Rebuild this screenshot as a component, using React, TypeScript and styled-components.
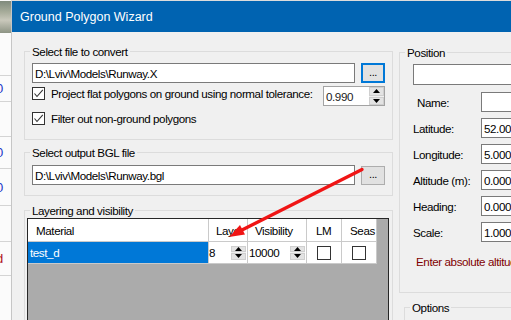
import React from "react";
import styled, { createGlobalStyle } from "styled-components";

const UI = "'Liberation Sans', Arial, sans-serif";

const GlobalStyle = createGlobalStyle`
  html, body { margin: 0; padding: 0; width: 511px; height: 320px; overflow: hidden; background: #dedede; }
  body { font-family: ${UI}; font-size: 11.6px; letter-spacing: -0.4px; color: #000; }
  * { box-sizing: border-box; }
`;

const Screen = styled.div`
  position: relative;
  width: 511px;
  height: 320px;
  display: flex;
  overflow: hidden;
  background: #dcdcdc;
`;

/* ---------- application behind the dialog ---------- */
const Backdrop = styled.div`
  width: 11px;
  flex: none;
  display: flex;
  flex-direction: column;
  background: #fbfbfb;
  overflow: hidden;
  padding-top: 1px;
`;
const BackdropPicture = styled.div`
  height: 32px;
  flex: none;
  background: linear-gradient(180deg, #7f8a7c 0%, #a8ad9b 35%, #c9c8bb 60%, #8d9484 100%);
`;
const BackdropRow = styled.div<{ $h: number }>`
  height: ${(p) => p.$h}px;
  flex: none;
  border-bottom: 1px solid #d4d4d4;
  display: flex;
  align-items: center;
  overflow: hidden;
`;
const BackdropGlyph = styled.span<{ $color: string }>`
  margin-left: -4px;
  font-size: 13px;
  color: ${(p) => p.$color};
`;

/* ---------- dialog window ---------- */
const Window = styled.div`
  flex: 1;
  min-width: 0;
  display: flex;
  flex-direction: column;
  margin-top: 1px;
  background: #f0f0f0;
  border-left: 1px solid #c6c6c6;
  overflow: hidden;
`;
const TitleBar = styled.div`
  height: 31px;
  flex: none;
  background: #0063b1;
  color: #fff;
  font-size: 12.5px;
  letter-spacing: 0;
  display: flex;
  align-items: center;
  padding-left: 8px;
`;
const Body = styled.div`
  flex: 1;
  display: flex;
  gap: 6px;
  padding-left: 12px;
  min-height: 0;
  overflow: hidden;
`;
const Column = styled.div<{ $w: number; $pt: number }>`
  width: ${(p) => p.$w}px;
  flex: none;
  padding-top: ${(p) => p.$pt}px;
  display: flex;
  flex-direction: column;
`;

const Group = styled.fieldset<{ $mt?: number; $ml?: number }>`
  margin: ${(p) => p.$mt ?? 0}px 0 0 ${(p) => p.$ml ?? 0}px;
  padding: 0;
  min-width: 0;
  border: 1px solid #dcdcdc;
`;
const Legend = styled.legend`
  padding: 0 2px;
  margin-left: 5px;
  line-height: 15px;
  font-size: 11.6px;
`;
const GroupContent = styled.div<{ $pad: string }>`
  padding: ${(p) => p.$pad};
  display: flex;
  flex-direction: column;
`;

const FileRow = styled.div`
  display: flex;
  align-items: center;
  gap: 6px;
  height: 20px;
`;
const TextBox = styled.div<{ $w?: number; $h?: number }>`
  ${(p) => (p.$w ? `width: ${p.$w}px; flex: none;` : "flex: 1;")}
  height: ${(p) => p.$h ?? 20}px;
  border: 1px solid #7a7a7a;
  background: #fff;
  padding-left: 2px;
  display: flex;
  align-items: center;
  white-space: nowrap;
  overflow: hidden;
`;
const BrowseButton = styled.div<{ $focused?: boolean }>`
  width: 24px;
  height: ${(p) => (p.$focused ? 20 : 19)}px;
  flex: none;
  background: #e1e1e1;
  border: ${(p) => (p.$focused ? "2px solid #0078d7" : "1px solid #adadad")};
  display: flex;
  align-items: center;
  justify-content: center;
  padding-bottom: 2px;
  font-size: 11px;
`;

const OptionRow = styled.div<{ $mt: number; $h: number }>`
  display: flex;
  align-items: flex-start;
  margin-top: ${(p) => p.$mt}px;
  height: ${(p) => p.$h}px;
`;
const CheckLabel = styled.span`
  margin-left: 6px;
  line-height: 15px;
  white-space: nowrap;
`;
const CheckBoxBox = styled.span<{ $size?: number; $mt?: number }>`
  width: ${(p) => p.$size ?? 13}px;
  height: ${(p) => p.$size ?? 13}px;
  margin-top: ${(p) => p.$mt ?? 0}px;
  flex: none;
  border: 1px solid #333;
  background: #fff;
  display: flex;
  align-items: center;
  justify-content: center;
`;

const Numeric = styled.div`
  margin-left: auto;
  width: 62px;
  height: 20px;
  border: 1px solid #a3a3a3;
  background: #fff;
  display: flex;
  align-items: stretch;
`;
const NumericText = styled.span`
  flex: 1;
  padding-left: 2px;
  display: flex;
  align-items: center;
  color: #1b1b1b;
`;
const SpinStack = styled.div<{ $w: number; $h?: number; $mr?: number }>`
  width: ${(p) => p.$w}px;
  ${(p) => (p.$h ? `height: ${p.$h}px; margin-left: auto; margin-right: ${p.$mr ?? 0}px;` : "")}
  flex: none;
  display: flex;
  flex-direction: column;
  gap: 1px;
  background: #f0f0f0;
`;
const SpinHalf = styled.div`
  flex: 1;
  background: #e3e3e3;
  border: 1px solid #cfcfcf;
  display: flex;
  align-items: center;
  justify-content: center;
`;

/* ---------- grid ---------- */
const Grid = styled.div`
  border: 1px solid #262626;
  background: #ababab;
  height: 112px;
  display: flex;
  flex-direction: column;
`;
const GridRow = styled.div<{ $h: number }>`
  display: flex;
  height: ${(p) => p.$h}px;
  flex: none;
`;
const Cell = styled.div<{ $w: number; $pad: number; $selected?: boolean; $center?: boolean }>`
  width: ${(p) => p.$w}px;
  flex: none;
  background: ${(p) => (p.$selected ? "#0078d7" : "#fff")};
  color: ${(p) => (p.$selected ? "#fff" : "#000")};
  border-right: 1px solid #cacaca;
  border-bottom: 1px solid #cacaca;
  padding-left: ${(p) => p.$pad}px;
  display: flex;
  align-items: center;
  justify-content: ${(p) => (p.$center ? "center" : "flex-start")};
  white-space: nowrap;
  overflow: hidden;
`;

/* ---------- right side ---------- */
const FieldRow = styled.div<{ $mt: number }>`
  display: flex;
  align-items: center;
  height: 20px;
  margin-top: ${(p) => p.$mt}px;
`;
const FieldLabel = styled.span<{ $indent?: number }>`
  width: 68px;
  flex: none;
  padding-left: ${(p) => p.$indent ?? 0}px;
  white-space: nowrap;
`;
const Hint = styled.div`
  margin-top: 12px;
  line-height: 15px;
  padding-left: 3px;
  color: #800000;
  white-space: nowrap;
`;

const Overlay = styled.svg`
  position: absolute;
  left: 0;
  top: 0;
  pointer-events: none;
`;

const Check = () => (
  <svg width="11" height="11" viewBox="0 0 11 11">
    <polyline points="1.5,5.5 4,8.5 9.8,1.8" fill="none" stroke="#333" strokeWidth="1.1" />
  </svg>
);

const Arrow = ({ up }: { up: boolean }) => (
  <svg width="7" height="4" viewBox="0 0 7 4">
    {up ? <polygon points="0,4 7,4 3.5,0" fill="#000" /> : <polygon points="0,0 7,0 3.5,4" fill="#000" />}
  </svg>
);

const Spin = ({ w, h, mr }: { w: number; h?: number; mr?: number }) => (
  <SpinStack $w={w} $h={h} $mr={mr}>
    <SpinHalf>
      <Arrow up />
    </SpinHalf>
    <SpinHalf>
      <Arrow up={false} />
    </SpinHalf>
  </SpinStack>
);

const columns = [
  { label: "Material", w: 181, pad: 8 },
  { label: "Layer", w: 39, pad: 7 },
  { label: "Visibility", w: 59, pad: 7 },
  { label: "LM", w: 35, pad: 9 },
  { label: "Seas", w: 35, pad: 8 },
];

const backdropRows: { h: number; g?: string; c?: string }[] = [
  { h: 43 },
  { h: 26, g: "0", c: "#1b36c8" },
  { h: 35 },
  { h: 32, g: "0", c: "#1b36c8" },
  { h: 37, g: "0", c: "#1b36c8" },
  { h: 36 },
  { h: 34, g: "d", c: "#b0101a" },
  { h: 50 },
];

const fields = [
  { label: "Name:", value: "", indent: 4, mt: 7 },
  { label: "Latitude:", value: "52.000000", mt: 6 },
  { label: "Longitude:", value: "5.000000", mt: 6 },
  { label: "Altitude (m):", value: "0.000", mt: 6 },
  { label: "Heading:", value: "0.000000", mt: 6 },
  { label: "Scale:", value: "1.000", mt: 6 },
];

export default function App() {
  return (
    <>
      <GlobalStyle />
      <Screen>
        <Backdrop>
          <BackdropPicture />
          {backdropRows.map((r, i) => (
            <BackdropRow key={i} $h={r.h}>
              {r.g && <BackdropGlyph $color={r.c!}>{r.g}</BackdropGlyph>}
            </BackdropRow>
          ))}
        </Backdrop>
        <Window>
          <TitleBar>Ground Polygon Wizard</TitleBar>
          <Body>
            <Column $w={369} $pt={12}>
              <Group>
                <Legend>Select file to convert</Legend>
                <GroupContent $pad="4px 7px 12px 7px">
                  <FileRow>
                    <TextBox>D:\Lviv\Models\Runway.X</TextBox>
                    <BrowseButton $focused>...</BrowseButton>
                  </FileRow>
                  <OptionRow $mt={3} $h={20}>
                    <CheckBoxBox $mt={1}>
                      <Check />
                    </CheckBoxBox>
                    <CheckLabel>Project flat polygons on ground using normal tolerance:</CheckLabel>
                    <Numeric>
                      <NumericText>0.990</NumericText>
                      <Spin w={15} />
                    </Numeric>
                  </OptionRow>
                  <OptionRow $mt={5} $h={16}>
                    <CheckBoxBox $mt={1}>
                      <Check />
                    </CheckBoxBox>
                    <CheckLabel>Filter out non-ground polygons</CheckLabel>
                  </OptionRow>
                </GroupContent>
              </Group>
              <Group $mt={5}>
                <Legend>Select output BGL file</Legend>
                <GroupContent $pad="5px 7px 10px 7px">
                  <FileRow>
                    <TextBox>D:\Lviv\Models\Runway.bgl</TextBox>
                    <BrowseButton>...</BrowseButton>
                  </FileRow>
                </GroupContent>
              </Group>
              <Group $mt={7}>
                <Legend>Layering and visibility</Legend>
                <GroupContent $pad="0 3px 0 2px">
                  <Grid>
                    <GridRow $h={23}>
                      {columns.map((c) => (
                        <Cell key={c.label} $w={c.w} $pad={c.pad}>
                          {c.label}
                        </Cell>
                      ))}
                    </GridRow>
                    <GridRow $h={22}>
                      <Cell $w={181} $pad={2} $selected>
                        test_d
                      </Cell>
                      <Cell $w={39} $pad={0}>
                        8
                        <Spin w={15} h={14} mr={1} />
                      </Cell>
                      <Cell $w={59} $pad={1}>
                        10000
                        <Spin w={15} h={14} mr={1} />
                      </Cell>
                      <Cell $w={35} $pad={0} $center>
                        <CheckBoxBox $size={14} />
                      </Cell>
                      <Cell $w={35} $pad={0} $center>
                        <CheckBoxBox $size={14} />
                      </Cell>
                    </GridRow>
                  </Grid>
                </GroupContent>
              </Group>
            </Column>
            <Column $w={140} $pt={13}>
              <Group>
                <Legend>Position</Legend>
                <GroupContent $pad="4px 0 23px 13px">
                  <TextBox $w={130} $h={21} />
                  {fields.map((f) => (
                    <FieldRow key={f.label} $mt={f.mt}>
                      <FieldLabel $indent={f.indent}>{f.label}</FieldLabel>
                      <TextBox $w={80}>{f.value}</TextBox>
                    </FieldRow>
                  ))}
                  <Hint>Enter absolute altitude</Hint>
                </GroupContent>
              </Group>
              <Group $mt={7} $ml={5}>
                <Legend>Options</Legend>
                <GroupContent $pad="4px 0 20px 8px" />
              </Group>
            </Column>
          </Body>
        </Window>
        <Overlay width="511" height="320" viewBox="0 0 511 320">
          <line x1="362" y1="169.5" x2="240" y2="231" stroke="#f01515" strokeWidth="3.4" strokeLinecap="round" />
          <polygon points="229,237 245,234.5 240,225" fill="#f01515" />
        </Overlay>
      </Screen>
    </>
  );
}
